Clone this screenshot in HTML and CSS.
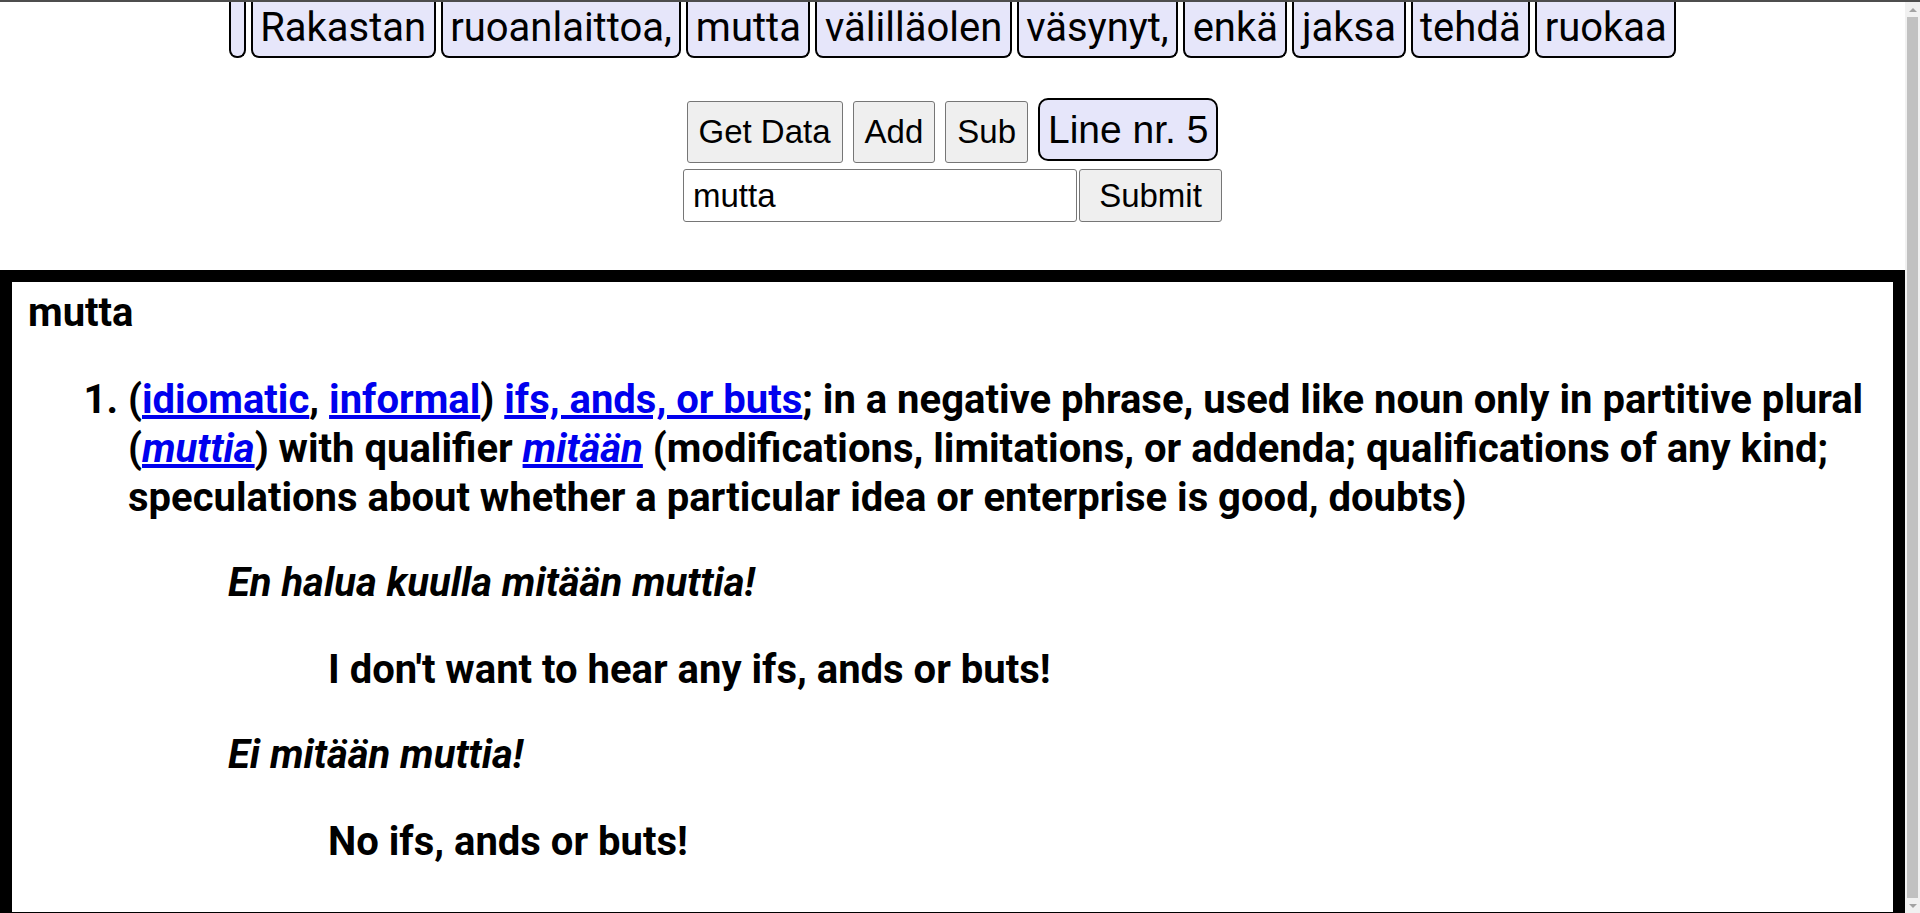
FILE: index.html
```html
<!DOCTYPE html>
<html lang="fi">
<head>
<meta charset="utf-8">
<title>Sanakirja</title>
<link rel="stylesheet" href="styles.css">
</head>
<body>
<div class="words">
  <button class="word word-empty"></button>
  <button class="word">Rakastan</button>
  <button class="word">ruoanlaittoa,</button>
  <button class="word">mutta</button>
  <button class="word">välilläolen</button>
  <button class="word">väsynyt,</button>
  <button class="word">enkä</button>
  <button class="word">jaksa</button>
  <button class="word">tehdä</button>
  <button class="word">ruokaa</button>
</div>
<div class="controls">
  <button class="btn">Get Data</button>
  <button class="btn">Add</button>
  <button class="btn">Sub</button>
  <button class="line-nr">Line nr. 5</button>
</div>
<form class="search">
  <input class="search-input" type="text" value="mutta">
  <button class="btn btn-submit" type="button">Submit</button>
</form>
<div class="entry">
  <p class="headword">mutta</p>
  <ol class="senses">
    <li>(<a href="#">idiomatic</a>, <a href="#">informal</a>) <a href="#">ifs, ands, or buts</a>; in a negative phrase, used like noun only in partitive plural (<i><a href="#">muttia</a></i>) with qualifier <i><a href="#">mitään</a></i> (modifications, limitations, or addenda; qualifications of any kind; speculations about whether a particular idea or enterprise is good, doubts)
      <div class="example">
        <p class="ex-fi"><i>En halua kuulla mitään muttia!</i></p>
        <p class="ex-en">I don't want to hear any ifs, ands or buts!</p>
      </div>
      <div class="example">
        <p class="ex-fi"><i>Ei mitään muttia!</i></p>
        <p class="ex-en">No ifs, ands or buts!</p>
      </div>
    </li>
  </ol>
</div>
<div class="scrollbar" aria-hidden="true">
  <div class="sb-btn"><span class="sb-up"></span></div>
  <div class="sb-thumb"></div>
  <div class="sb-btn"><span class="sb-down"></span></div>
</div>
</body>
</html>
```

FILE: styles.css
```css
html {
  border-top: 2px solid #4d4d4d;
  margin: 0;
  padding: 0;
  background: #ffffff;
}

body {
  margin: 0;
  padding: 0 15px 0 0;
  font-family: Roboto, "Liberation Sans", sans-serif;
  color: #000;
}

.words {
  display: flex;
  justify-content: center;
  gap: 5px;
}

.word {
  font-family: Roboto, sans-serif;
  font-size: 40px;
  line-height: 47px;
  color: #000;
  background: #e6e6fa;
  border: 2px solid #000;
  border-top: 0;
  border-radius: 0 0 8px 8px;
  padding: 2px 7.5px 5px;
  margin: 0;
}

.word-empty {
  padding: 0;
  width: 17px;
}

.controls {
  display: flex;
  justify-content: center;
  align-items: baseline;
  gap: 10px;
  margin-top: 40px;
}

.btn {
  font-family: "Liberation Sans", Arial, sans-serif;
  font-size: 33px;
  line-height: 38px;
  color: #000;
  background: #efefef;
  border: 1px solid #767676;
  border-radius: 3px;
  padding: 11px 11px;
  margin: 0;
}

.line-nr {
  font-family: "Liberation Sans", Arial, sans-serif;
  font-size: 39px;
  line-height: 45px;
  color: #000;
  background: #e6e6fa;
  border: 2px solid #000;
  border-radius: 10px;
  padding: 7px 8px;
  margin: 0;
}

.search {
  display: flex;
  justify-content: center;
  gap: 2px;
  margin: 6px 0 0;
}

.search-input {
  font-family: "Liberation Sans", Arial, sans-serif;
  font-size: 33px;
  width: 394px;
  height: 53px;
  box-sizing: border-box;
  border: 1px solid #767676;
  border-radius: 3px;
  padding: 0 9px;
  margin: 0;
  color: #000;
}

.btn-submit {
  width: 143px;
  height: 53px;
  padding: 0;
  margin: 0;
}

.entry {
  margin-top: 48px;
  border: 12px solid #000;
  padding: 6px 16px 8px;
  font-family: Roboto, sans-serif;
  font-weight: 700;
  font-size: 40px;
  line-height: 49px;
}

.entry p {
  margin: 0;
}

.senses {
  margin: 38px 0 0;
  padding-left: 100px;
}

.senses a {
  color: #0000ee;
  text-decoration: underline;
}

.example {
  padding-left: 100px;
}

.entry .ex-fi {
  margin-top: 36px;
}

.entry .ex-en {
  margin-top: 38px;
  padding-left: 100px;
}

.example:last-child {
  margin-bottom: 38px;
}

/* fake classic scrollbar drawn over the right edge of the viewport */
.scrollbar {
  position: fixed;
  top: 2px;
  right: 0;
  bottom: 0;
  width: 15px;
  background: #f1f1f1;
  display: flex;
  flex-direction: column;
}

.sb-btn {
  height: 15px;
  display: flex;
  align-items: center;
  justify-content: center;
}

.sb-up,
.sb-down {
  width: 0;
  height: 0;
  border-left: 4px solid transparent;
  border-right: 4px solid transparent;
}

.sb-up {
  border-bottom: 4px solid #a3a3a3;
}

.sb-down {
  border-top: 4px solid #a3a3a3;
}

.sb-thumb {
  flex: 1;
  margin: 0 2px;
  background: #c1c1c1;
}
```
